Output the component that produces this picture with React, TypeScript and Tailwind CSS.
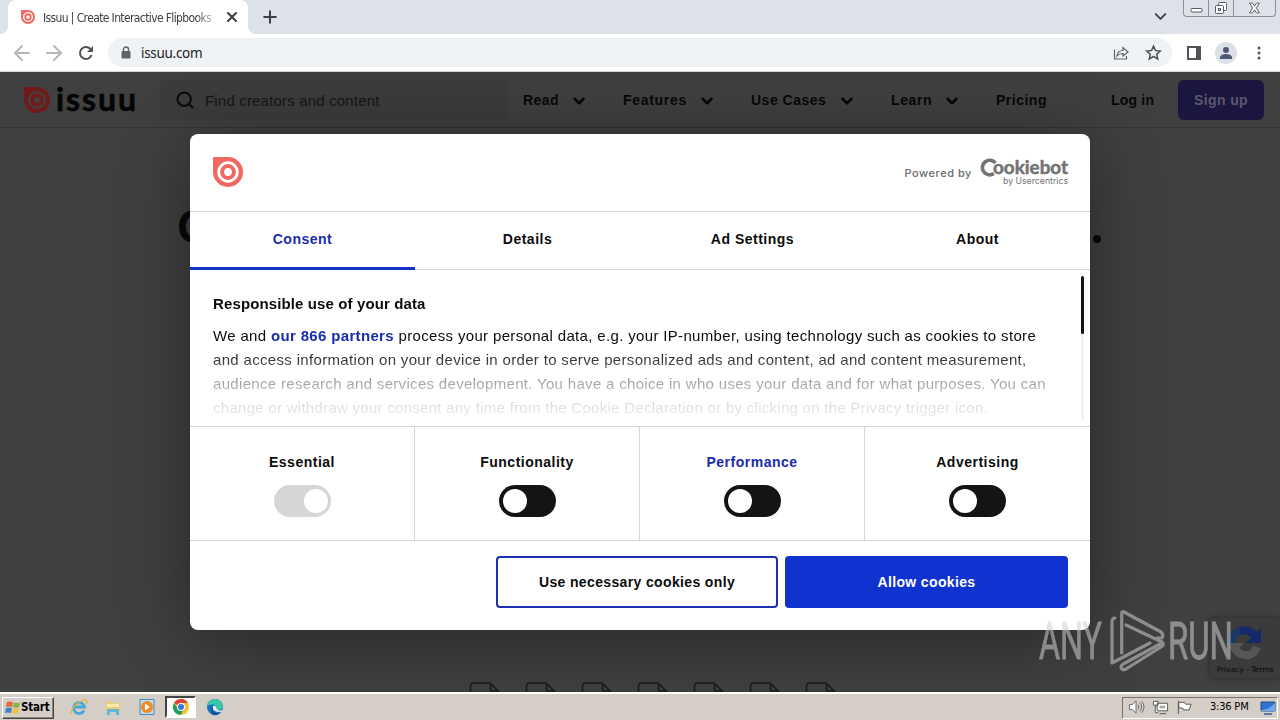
import { useState } from "react";
import { ArrowLeft, ArrowRight, ChevronDown, Lock, Plus, Search, X } from "lucide-react";

const navItems = [
  { label: "Read", menu: true, width: "w-[100px]", text: "w-[47px]", tracking: "tracking-[0.4px]" },
  { label: "Features", menu: true, width: "w-[128px]", text: "w-[75px]", tracking: "tracking-[0.7px]" },
  { label: "Use Cases", menu: true, width: "w-[140px]", text: "w-[87px]", tracking: "tracking-[0.5px]" },
  { label: "Learn", menu: true, width: "w-[105px]", text: "w-[52px]", tracking: "tracking-[0.6px]" },
  { label: "Pricing", menu: false, width: "w-[82px]", text: "w-[60px]", tracking: "tracking-[0.5px]" },
];

const tabs = ["Consent", "Details", "Ad Settings", "About"];

const IssuuMark = ({ className }: { className: string }) => (
  <svg viewBox="0 0 30 30" className={className}>
    <path d="M1 0H15A15 15 0 1 1 0 15V1Q0 0 1 0Z" fill="#f0685f" />
    <circle cx="15" cy="15" r="9.3" fill="none" stroke="#fff" strokeWidth="2.8" />
    <circle cx="15" cy="15" r="3.9" fill="#fff" />
  </svg>
);

const BrowserBar = () => (
  <div className="h-[72px] shrink-0 border-b border-[#d3d5d9] bg-white">
    {/* Tab strip */}
    <div className="flex h-[34px] items-start bg-[#dde1e8]">
      <div className="flex h-[34px] w-2 shrink-0 items-end bg-white">
        <div className="h-full w-2 rounded-br-lg bg-[#dde1e8]" />
      </div>
      <div className="flex h-[34px] w-[240px] items-center rounded-t-lg bg-white pl-[13px]">
        <IssuuMark className="h-[14px] w-[14px]" />
        <div className="ml-2 w-[174px] overflow-hidden whitespace-nowrap pt-px font-['DejaVu_Sans_Condensed','DejaVu_Sans',sans-serif] text-[12px] tracking-[-0.62px] text-[#3c4043] [mask-image:linear-gradient(to_right,black_88%,transparent_102%)]">
          Issuu | Create Interactive Flipbooks
        </div>
        <X className="ml-[7px] h-4 w-4 text-[#3c4043]" strokeWidth={3} />
      </div>
      <div className="flex h-[34px] w-2 shrink-0 bg-white">
        <div className="h-full w-2 rounded-bl-lg bg-[#dde1e8]" />
      </div>
      <Plus className="ml-1 mt-[7px] h-5 w-5 text-[#3c4043]" strokeWidth={2.4} />
      <ChevronDown className="ml-auto mr-[13px] mt-[7px] h-[19px] w-[19px] text-[#3c4043]" strokeWidth={2.4} />
      <div className="mr-1 flex h-[17px] w-[93px] rounded-b border border-t-0 border-[#8d9098] text-[#565b66]">
        <div className="w-[25px] border-r border-[#8d9098]">
          <svg viewBox="0 0 25 16" className="h-4 w-[25px]">
            <rect x="7" y="8.5" width="11" height="3.5" rx="1" fill="#fff" stroke="currentColor" />
          </svg>
        </div>
        <div className="w-[25px] border-r border-[#8d9098]">
          <svg viewBox="0 0 25 16" className="h-4 w-[25px]" fill="#fff" stroke="currentColor">
            <rect x="9.5" y="2.5" width="8" height="8" rx="1" />
            <rect x="6.5" y="5.5" width="8" height="8" rx="1" />
            <rect x="9.5" y="8.5" width="2" height="2" />
          </svg>
        </div>
        <svg viewBox="0 0 42 16" className="h-4 w-[41px]" fill="#fff" stroke="currentColor">
          <path d="M16 3h3l2 3 2-3h3l-3 5 3 5h-3l-2-3-2 3h-3l3-5z" />
        </svg>
      </div>
    </div>

    {/* Address row */}
    <div className="flex h-[37px] items-center pl-[10px] pr-3">
      <ArrowLeft className="h-6 w-6 text-[#b4b6b9]" strokeWidth={1.9} />
      <ArrowRight className="ml-2 h-6 w-6 text-[#b4b6b9]" strokeWidth={1.9} />
      <svg viewBox="0 0 16 16" className="ml-3 h-4 w-4" fill="none" stroke="#505458" strokeWidth="2">
        <path d="M13.600 10A6 6 0 1 1 12.300 3.800L14 5.500" />
        <path d="M15 1v6H9Z" fill="#505458" stroke="none" />
      </svg>
      <div className="ml-[14px] flex h-[29px] w-[1064px] items-center rounded-full bg-[#f0f3f5] pl-[13px] pr-[10px]">
        <svg viewBox="0 0 10 13" className="h-[13px] w-[10px]">
          <path d="M2.500 6V3.500a2.500 2.500 0 0 1 5 0V6" fill="none" stroke="#5f6368" strokeWidth="1.400" />
          <rect x="0.500" y="5" width="9" height="7.500" rx="1" fill="#5f6368" />
        </svg>
        <span className="ml-[10px] pt-[2px] font-['Noto_Sans',sans-serif] text-[13.5px] leading-none tracking-[-0.3px] text-[#202124]">issuu.com</span>
        <svg viewBox="0 0 16 16" className="ml-auto h-4 w-4" fill="none" stroke="#5f6368" strokeWidth="1.200">
          <path d="M1.500 4.500v9.500h12v-3M4 11q.5-5.500 6-5.500V2.500L15 7 10 11V8.500Q6 8.300 4 11Z" />
        </svg>
        <svg viewBox="0 0 24 24" className="ml-4 h-[17px] w-[17px]" fill="none" stroke="#505458" strokeWidth="2.200">
          <path d="m12 3 2.800 6.200 6.700.7-5 4.500 1.400 6.600-5.900-3.400L6.100 21l1.400-6.600-5-4.500 6.700-.7Z" />
        </svg>
      </div>
      <svg viewBox="0 0 14 14" className="ml-[15px] h-[14px] w-[14px]">
        <path d="M1 1h12v12H1z" fill="none" stroke="#505458" strokeWidth="2" />
        <path d="M9 0h5v14H9z" fill="#505458" />
      </svg>
      <svg viewBox="0 0 22 22" className="ml-[14px] h-[22px] w-[22px]">
        <circle cx="11" cy="11" r="11" fill="#dce0e7" />
        <circle cx="11" cy="8" r="3" fill="#4c5a75" />
        <path d="M5 17v-2q1-3 6-3t6 3v2Z" fill="#4c5a75" />
      </svg>
      <svg viewBox="0 0 4 14" className="ml-5 h-[14px] w-1" fill="#505458">
        <circle cx="2" cy="2" r="1.500" />
        <circle cx="2" cy="7" r="1.500" />
        <circle cx="2" cy="12" r="1.500" />
      </svg>
    </div>
  </div>
);

const SiteHeader = () => (
  <header className="flex h-14 shrink-0 items-center border-b border-[#353535] pl-6 text-[14px] font-bold text-[#080808]">
    <svg viewBox="0 0 114 30" className="h-[30px] w-[114px] overflow-visible">
      <path d="M0 2H13A13 13 0 1 1 0 15Z" fill="#72191b" />
      <circle cx="13" cy="15" r="7.800" fill="none" stroke="#454040" strokeWidth="2.200" />
      <circle cx="13" cy="15" r="3" fill="#454040" />
      <text x="32" y="26" textLength="80" fontFamily="Lato" fontWeight="700" fontSize="32" fill="#050505" stroke="#050505" strokeWidth="0.600">
        issuu
      </text>
    </svg>
    <div className="ml-[22px] flex h-10 w-[348px] items-center rounded bg-[#3c3c3c] pl-[15px] font-normal text-[#161616]">
      <Search className="h-5 w-5 text-[#0c0c0c]" strokeWidth={2.6} />
      <span className="ml-[10px] pt-[3px] text-[15px] tracking-[0.18px]">Find creators and content</span>
    </div>
    <nav className="ml-[15px] flex pt-px">
      {navItems.map((item) => (
        <div key={item.label} className={`flex items-center ${item.width}`}>
          <span className={`whitespace-nowrap ${item.text} ${item.tracking}`}>{item.label}</span>
          {item.menu && <ChevronDown className="mt-px h-[18px] w-[18px] shrink-0" strokeWidth={3.4} />}
        </div>
      ))}
    </nav>
    <div className="h-6 w-px bg-[#3b3b3b]" />
    <span className="ml-8 w-[67px] whitespace-nowrap pt-px tracking-[0.2px]">Log in</span>
    <button className="h-10 w-[86px] rounded-md bg-[#1a1640] pt-px tracking-[0.4px] text-[#5a5870]">Sign up</button>
  </header>
);

const Toggle = ({ on, disabled }: { on: boolean; disabled?: boolean }) => (
  <span
    className={`flex h-8 w-[57px] items-center rounded-full px-1 ${disabled ? "bg-[#d6d6d6]" : "bg-[#141414]"} ${
      on ? "justify-end pr-[3px]" : "justify-start"
    }`}
  >
    <span className="h-6 w-6 rounded-full bg-white" />
  </span>
);

const ConsentDialog = () => {
  const [activeTab, setActiveTab] = useState("Consent");
  const [choices, setChoices] = useState<Record<string, boolean>>({ Essential: true });

  return (
    <div className="absolute left-[190px] top-[62px] flex h-[496px] w-[900px] flex-col overflow-hidden rounded-lg bg-white text-[14px] text-[#0c0c0c]">
      <div className="flex h-[78px] shrink-0 items-center justify-between border-b border-[#d6d6d6] pl-[23px] pr-[22px]">
        <IssuuMark className="mb-px h-[30px] w-[30px]" />
        <div className="flex items-center">
          <span className="pt-px font-[Inter,sans-serif] text-[11px] font-medium tracking-[0.55px] text-[#6b6b6b]">Powered by</span>
          <svg viewBox="0 0 89 30" className="ml-[7px] h-[30px] w-[89px] overflow-visible" fill="#737373">
            <path d="M16.400 5A7.300 7.300 0 1 0 14.800 15.600" fill="none" stroke="#737373" strokeWidth="3.600" />
            <text x="14" y="16" textLength="75" lengthAdjust="spacingAndGlyphs" fontFamily="Lato" fontWeight="700" fontSize="18.500" stroke="#737373" strokeWidth="0.500">
              ookiebot
            </text>
            <text x="24" y="25.500" textLength="65" lengthAdjust="spacingAndGlyphs" fontFamily="Inter, sans-serif" fontSize="9">
              by Usercentrics
            </text>
          </svg>
        </div>
      </div>

      {/* Tabs */}
      <div className="grid h-[58px] shrink-0 grid-cols-4 border-b border-[#d6d6d6]">
        {tabs.map((tab) => (
          <button
            key={tab}
            onClick={() => setActiveTab(tab)}
            className={`border-b-[3px] text-[14px] font-bold tracking-[0.5px] ${
              activeTab === tab ? "-mb-px border-[#1432c4] pb-px text-[#1a2ca8]" : "border-transparent"
            }`}
          >
            {tab}
          </button>
        ))}
      </div>

      {/* Scrollable description */}
      <div className="flex h-[156px] shrink-0 justify-between pl-[23px] pr-[6px] pt-[6px]">
        <div className="whitespace-nowrap pt-4 leading-6 [mask-image:linear-gradient(to_bottom,black_50%,rgba(0,0,0,0.38)_71%,rgba(0,0,0,0.14)_86%,rgba(0,0,0,0.04)_100%)]">
          <h2 className="text-[15px] font-bold tracking-[0.12px]">Responsible use of your data</h2>
          <p className="mt-2 text-[15px]">
            <span className="block tracking-[0.34px]">
              We and <b className="text-[#1a2ca8]">our 866 partners</b> process your personal data, e.g. your IP-number, using technology such as cookies to store
            </span>
            <span className="block tracking-[0.33px]">
              and access information on your device in order to serve personalized ads and content, ad and content measurement,
            </span>
            <span className="block tracking-[0.32px]">
              audience research and services development. You have a choice in who uses your data and for what purposes. You can
            </span>
            <span className="block tracking-[0.28px]">
              change or withdraw your consent any time from the Cookie Declaration or by clicking on the Privacy trigger icon.
            </span>
          </p>
        </div>
        <div className="h-[144px] w-[3px] rounded bg-[#f3f3f3]">
          <div className="h-[58px] w-[3px] rounded bg-[#141414]" />
        </div>
      </div>

      {/* Cookie categories */}
      <div className="grid h-[115px] shrink-0 grid-cols-4 border-y border-[#d6d6d6]">
        {["Essential", "Functionality", "Performance", "Advertising"].map((name) => (
          <button
            key={name}
            disabled={name === "Essential"}
            onClick={() => setChoices({ ...choices, [name]: !choices[name] })}
            className="flex flex-col items-center border-r border-[#d6d6d6] pt-[25px] last:border-r-0"
          >
            <span className={`text-[14px] font-bold leading-5 tracking-[0.5px] ${name === "Performance" ? "text-[#1a2ca8]" : ""}`}>
              {name}
            </span>
            <span className="mt-[13px]">
              <Toggle on={!!choices[name]} disabled={name === "Essential"} />
            </span>
          </button>
        ))}
      </div>

      <div className="flex justify-end gap-[7px] pr-[22px] pt-[15px] font-bold tracking-[0.36px]">
        <button className="h-[52px] w-[282px] rounded border-2 border-[#1a2fb4]">Use necessary cookies only</button>
        <button className="h-[52px] w-[283px] rounded bg-[#1032cf] text-white">Allow cookies</button>
      </div>
    </div>
  );
};

const RecaptchaBadge = () => (
  <div className="absolute left-[1210px] top-[546px] flex h-[60px] w-[70px] flex-col items-center rounded-l-sm bg-[#3b3b3b] pt-[6px] shadow-[0_0_4px_#222]">
    <svg viewBox="0 0 38 38" className="h-[38px] w-[38px]" fill="none" strokeWidth="8">
      <path d="M5 19A13 13 0 0 1 15 7" stroke="#193a67" />
      <path d="M14 7Q25 4 31 15" stroke="#14296a" />
      <path d="M35 4v15H20Z" fill="#14296a" />
      <path d="M7 21Q12 33 23 31Q29 29 31 23" stroke="#565656" />
      <path d="M4 19h14l-8 9Z" fill="#565656" />
    </svg>
    <span className="mt-[2px] whitespace-nowrap font-['DejaVu_Sans',sans-serif] text-[7.5px] leading-3 text-[#080808]">Privacy - Terms</span>
  </div>
);

const Watermark = () => (
  <svg viewBox="0 0 194 62" className="absolute left-[1038px] top-[538px] h-[62px] w-[194px] overflow-visible opacity-55" fill="#cfcfcf">
    <g fontFamily="Roboto, sans-serif" fontSize="51" stroke="#cfcfcf" strokeWidth="0.800">
      <text x="1" y="49" textLength="63" lengthAdjust="spacingAndGlyphs">
        ANY
      </text>
      <text x="130" y="49" textLength="65" lengthAdjust="spacingAndGlyphs">
        RUN
      </text>
    </g>
    <g fill="none" stroke="#cfcfcf" strokeWidth="3.200" strokeLinejoin="round" strokeLinecap="round">
      <path d="M77 8Q74 8 74 12V53L112 33" />
      <path d="M83.700 43V3Q84 1 86 2L123 22Q126 25 124 28L119 28" />
      <path d="M88 15L124 32Q127 35 123 37L88 59Q84 61 83 57Q84 54 87 53L122 34" />
    </g>
  </svg>
);

const Taskbar = () => (
  <footer className="flex h-7 shrink-0 items-center border-t-2 border-white bg-[#d5cec6] font-['DejaVu_Sans_Condensed','DejaVu_Sans',sans-serif] text-[11px] text-black">
    <button className="ml-[2px] mt-px flex h-[22px] w-[52px] items-center border border-b-[#444] border-l-white border-r-[#444] border-t-white pl-[2px] shadow-[inset_-1px_-1px_#8a857e]">
      <svg viewBox="0 0 16 16" className="h-4 w-4 shrink-0">
        <path d="M2 2q3-1 6 0L7 7Q4 6 1 7Z" fill="#e8653a" />
        <path d="M9 2.500q3 1 6 0L14 7q-3 1-6 0Z" fill="#7cb441" />
        <path d="M1 8q3-1 6 0l-1 5q-3-1-6 0Z" fill="#3f82c8" />
        <path d="M8 8q3 1 6 0l-1 5q-3 1-6 0Z" fill="#f2c33a" />
      </svg>
      <span className="text-[11.5px] font-bold tracking-[-0.2px]">Start</span>
    </button>
    <div className="ml-2 flex items-center">
      <div className="flex w-[34px] justify-center">
        <svg viewBox="0 0 18 18" className="h-[18px] w-[18px]" fill="none">
          <path d="M14 12.500A5.500 5.500 0 1 1 14.500 9H5" stroke="#45a9dd" strokeWidth="2.800" />
          <path d="M2 16Q-1 13 7 6T17 3q0 2-1 3" stroke="#e4b63b" strokeWidth="1.300" />
        </svg>
      </div>
      <div className="flex w-[34px] justify-center">
        <svg viewBox="0 0 18 18" className="h-[18px] w-[18px]">
          <path d="M2 4l5-1 1 2h8v9H2Z" fill="#e8cf77" />
          <path d="M3 6h12v3H3Z" fill="#f8e9ad" />
          <path d="M3 17v-6h12v6h-3v-3H6v3Z" fill="#64b6d8" />
        </svg>
      </div>
      <div className="flex w-[34px] justify-center">
        <svg viewBox="0 0 18 18" className="h-[18px] w-[18px]">
          <path d="M2 1.500h14v15H2Z" fill="#bcdcf0" stroke="#4e87b8" />
          <circle cx="9" cy="9" r="6" fill="#f08a24" />
          <path d="m7 5.500 5 3.500-5 3.500Z" fill="#fff" />
        </svg>
      </div>
      <div className="ml-px flex h-[22px] w-[31px] items-center justify-center border-2 border-b-white border-l-[#444] border-r-white border-t-[#444] bg-white">
        <svg viewBox="0 0 16 16" className="h-4 w-4">
          <circle cx="8" cy="8" r="8" fill="#f2c230" />
          <path d="M8 8 1 4A8 8 0 0 1 15 4H8Z" fill="#dc4437" />
          <path d="M1 4A8 8 0 0 0 7.500 16L11 10H5Z" fill="#1fa05a" />
          <circle cx="8" cy="8" r="4" fill="#fff" />
          <circle cx="8" cy="8" r="3" fill="#3a78dd" />
        </svg>
      </div>
      <div className="flex w-[38px] justify-center">
        <svg viewBox="0 0 18 18" className="h-[18px] w-[18px]">
          <circle cx="9" cy="9" r="8" fill="#1673c2" />
          <path d="M1 8Q2 1 9 1q8 1 8 7 0 4-5 4-3-1-2-3Q8 4 1 8Z" fill="#3ac6a4" />
          <path d="M7 8q-2 6 8 6 2-1 2-2-3 1-5 0-2-1-2-3-1-2-3-1Z" fill="#e5edf0" />
          <path d="M7 9Q6 16 14 15 11 18 7 17 3 12 7 9Z" fill="#124f9b" />
        </svg>
      </div>
    </div>
    <div className="ml-auto mr-[2px] mt-px flex h-[22px] w-[156px] items-center border border-b-white border-l-[#77726b] border-r-white border-t-[#77726b] pl-[5px]">
      <svg viewBox="0 0 18 18" className="h-[17px] w-[17px] shrink-0" fill="#fff" stroke="#666" strokeWidth="1">
        <path d="M1.500 6h3l4-4v13l-4-4h-3Z" />
        <path d="M10.500 6q2 2.500 0 5M12.500 4q4 4.500 0 9M14.500 2.500q5 6 0 12" fill="none" />
      </svg>
      <svg viewBox="0 0 18 18" className="ml-[7px] h-[17px] w-[17px] shrink-0" fill="#fff" stroke="#555">
        <path d="M5.500 4.500h11v8h-11ZM8 15.500h7M1.500 2.500h5v4h-5ZM3.500 6.500v8h3" />
        <path d="M8 7h6v3H8Z" fill="#aaa" stroke="none" />
      </svg>
      <svg viewBox="0 0 18 18" className="ml-[7px] h-[17px] w-[17px] shrink-0" fill="#fff" stroke="#555">
        <path d="M2.500 16V2M3 3.500h6l1 2h6l-2 6H8l-1-2H3Z" />
      </svg>
      <span className="ml-[17px] whitespace-nowrap tracking-[-0.2px]">3:36 PM</span>
      <svg viewBox="0 0 16 14" className="ml-3 h-[14px] w-4 shrink-0">
        <path d="M1 1h14v9H1Z" fill="#2d73cf" stroke="#234c86" />
        <path d="M1 9Q9 9 15 2v8H1Z" fill="#6eabea" />
        <path d="M4 13h8" stroke="#345e99" strokeWidth="1.500" />
      </svg>
    </div>
  </footer>
);

const App = () => (
  <div className="flex h-[720px] w-[1280px] flex-col overflow-hidden font-['Liberation_Sans',Arial,sans-serif]">
    <BrowserBar />
    <main className="relative flex h-[620px] flex-col overflow-hidden bg-[#404040]">
      <SiteHeader />
      {/* Hero headline, mostly hidden by the dialog */}
      <div className="ml-[177px] mr-[179px] mt-[68px] flex h-[60px] items-center justify-between font-[Inter,sans-serif] text-[45px] font-bold leading-none text-[#080808]">
        <span>C</span>
        <span className="mt-[25px] h-2 w-2 rounded-full bg-[#080808]" />
      </div>
      <div className="mt-auto flex h-[10px] justify-center gap-6 overflow-hidden pl-[25px]">
        {[0, 1, 2, 3, 4, 5, 6].map((i) => (
          <svg key={i} viewBox="0 0 32 40" className="h-10 w-8 shrink-0" fill="none" stroke="#1b1b1b" strokeWidth="1.700">
            <path d="M1.500 40V4Q1.500 1 5 1H21L31 11V40M21.500 1V9H30" />
          </svg>
        ))}
      </div>
      <div className="absolute left-[190px] top-[62px] h-[496px] w-[900px] rounded-lg shadow-[0_8px_70px_rgba(0,0,0,0.4)]" />
      <RecaptchaBadge />
      <ConsentDialog />
      <Watermark />
    </main>
    <Taskbar />
  </div>
);

export default App;
